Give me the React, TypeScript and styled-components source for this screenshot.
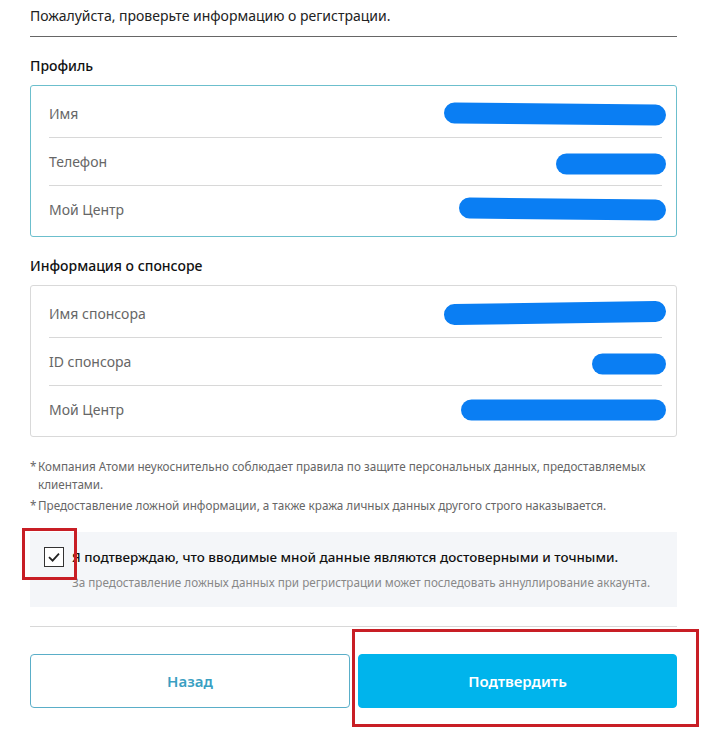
import styled, { createGlobalStyle } from 'styled-components';

const GlobalStyle = createGlobalStyle`
  html, body {
    margin: 0;
    padding: 0;
    background: #fff;
    font-family: 'Noto Sans', 'Open Sans', sans-serif;
  }
  * { box-sizing: border-box; }
`;

const profile = [
  { label: 'Имя', width: 222, tilt: 2, shift: 1 },
  { label: 'Телефон', width: 110, tilt: 0, shift: 2 },
  { label: 'Мой Центр', width: 207, tilt: 2, shift: -1 },
];

const sponsor = [
  { label: 'Имя спонсора', width: 222, tilt: -3, shift: 0 },
  { label: 'ID спонсора', width: 74, tilt: 0, shift: 2 },
  { label: 'Мой Центр', width: 205, tilt: 0, shift: 0 },
];

function Scribble({ width, tilt }: { width: number; tilt: number }) {
  const h = 26;
  const mid = h / 2;
  return (
    <svg width={width} height={h} viewBox={`0 0 ${width} ${h}`}>
      <line
        x1={10.5}
        y1={mid - tilt / 2}
        x2={width - 10.5}
        y2={mid + tilt / 2}
        stroke='#0a7ef3'
        strokeWidth={21}
        strokeLinecap='round'
      />
    </svg>
  );
}

type Row = { label: string; width: number; tilt: number; shift: number };

function InfoBox({ rows, accent }: { rows: Row[]; accent?: boolean }) {
  return (
    <Box $accent={accent}>
      {rows.map((row, index) => (
        <Item key={index}>
          <Label>{row.label}</Label>
          <Redact $shift={row.shift}>
            <Scribble width={row.width} tilt={row.tilt} />
          </Redact>
        </Item>
      ))}
    </Box>
  );
}

export default function App() {
  return (
    <>
      <GlobalStyle />
      <Page>
        <Intro>Пожалуйста, проверьте информацию о регистрации.</Intro>

        <SectionTitle>Профиль</SectionTitle>
        <InfoBox rows={profile} accent />

        <SectionTitle>Информация о спонсоре</SectionTitle>
        <InfoBox rows={sponsor} />

        <Notes>
          <li>Компания Атоми неукоснительно соблюдает правила по защите персональных данных, предоставляемых клиентами.</li>
          <li>Предоставление ложной информации, а также кража личных данных другого строго наказывается.</li>
        </Notes>

        <Agree>
          <AgreeLine>
            <Check>
              <svg width='14' height='12' viewBox='0 0 14 12'>
                <path d='M2 6.2 L5.6 9.6 L12 2.6' fill='none' stroke='#222' strokeWidth='1.8' />
              </svg>
            </Check>
            <AgreeText>Я подтверждаю, что вводимые мной данные являются достоверными и точными.</AgreeText>
          </AgreeLine>
          <AgreeHint>За предоставление ложных данных при регристрации может последовать аннуллирование аккаунта.</AgreeHint>
          <Mark $left={-8} $top={-4} $w={55} $h={52} />
        </Agree>

        <Actions>
          <Button>Назад</Button>
          <ButtonWrap>
            <Button $primary>Подтвердить</Button>
            <Mark $left={-6} $top={-25} $w={347} $h={98} />
          </ButtonWrap>
        </Actions>
      </Page>
    </>
  );
}

const Page = styled.div`
  width: 707px;
  height: 734px;
  padding: 0 30px;
  overflow: hidden;
`;

const Intro = styled.div`
  padding: 5px 0 10px;
  font-size: 14px;
  line-height: 21px;
  color: #222;
  border-bottom: 1px solid #666;
`;

const SectionTitle = styled.div`
  padding: 19px 0 9px;
  font-size: 14px;
  font-weight: 500;
  line-height: 20px;
  color: #111;
`;

const Box = styled.div<{ $accent?: boolean }>`
  border: 1px solid ${(p) => (p.$accent ? '#6cbfcd' : '#d9d9d9')};
  border-radius: 3px;
  padding: 3px 14px 3px 18px;
`;

const Item = styled.div`
  height: 48px;
  display: flex;
  align-items: center;
  justify-content: space-between;
  border-top: 1px solid #d8d8d8;
  &:first-child { border-top: none; }
`;

const Label = styled.span`
  font-size: 14px;
  color: #666;
`;

const Redact = styled.span<{ $shift: number }>`
  display: flex;
  margin-right: -4px;
  transform: translateY(${(p) => p.$shift}px);
`;

const Notes = styled.ul`
  list-style: none;
  margin: 0;
  padding: 20px 0 0;
  li {
    position: relative;
    padding-left: 8px;
    font-size: 11.7px;
    line-height: 18px;
    color: #666;
    margin-bottom: 3px;
  }
  li::before {
    content: '*';
    position: absolute;
    left: 0;
    top: 0;
  }
`;

const Agree = styled.div`
  position: relative;
  margin-top: 18px;
  background: #f4f6f9;
  padding: 15px 15px 16px 14px;
`;

const AgreeLine = styled.div`
  display: flex;
  align-items: center;
  gap: 8px;
`;

const Check = styled.span`
  width: 20px;
  height: 20px;
  border: 1px solid #333;
  background: #fff;
  display: flex;
  align-items: center;
  justify-content: center;
`;

const AgreeText = styled.span`
  font-size: 13.4px;
  font-weight: 500;
  color: #111;
`;

const AgreeHint = styled.div`
  margin-top: 6px;
  padding-left: 28px;
  font-size: 11.7px;
  line-height: 18px;
  color: #888;
  white-space: nowrap;
`;

const Mark = styled.div<{ $left: number; $top: number; $w: number; $h: number }>`
  position: absolute;
  left: ${(p) => p.$left}px;
  top: ${(p) => p.$top}px;
  width: ${(p) => p.$w}px;
  height: ${(p) => p.$h}px;
  border: 3px solid #c81e25;
  pointer-events: none;
`;

const Actions = styled.div`
  margin-top: 19px;
  border-top: 1px solid #d8d8d8;
  padding-top: 27px;
  display: grid;
  grid-template-columns: 320px 1fr;
  gap: 8px;
`;

const ButtonWrap = styled.div`
  position: relative;
  display: flex;
`;

const Button = styled.button<{ $primary?: boolean }>`
  flex: 1;
  height: 54px;
  border-radius: 4px;
  font-family: 'Noto Sans', sans-serif;
  font-size: 15px;
  font-weight: 600;
  cursor: pointer;
  border: 1px solid ${(p) => (p.$primary ? '#00b4ec' : '#5aaec8')};
  background: ${(p) => (p.$primary ? '#00b4ec' : '#fff')};
  color: ${(p) => (p.$primary ? '#fff' : '#3a9fc2')};
`;
